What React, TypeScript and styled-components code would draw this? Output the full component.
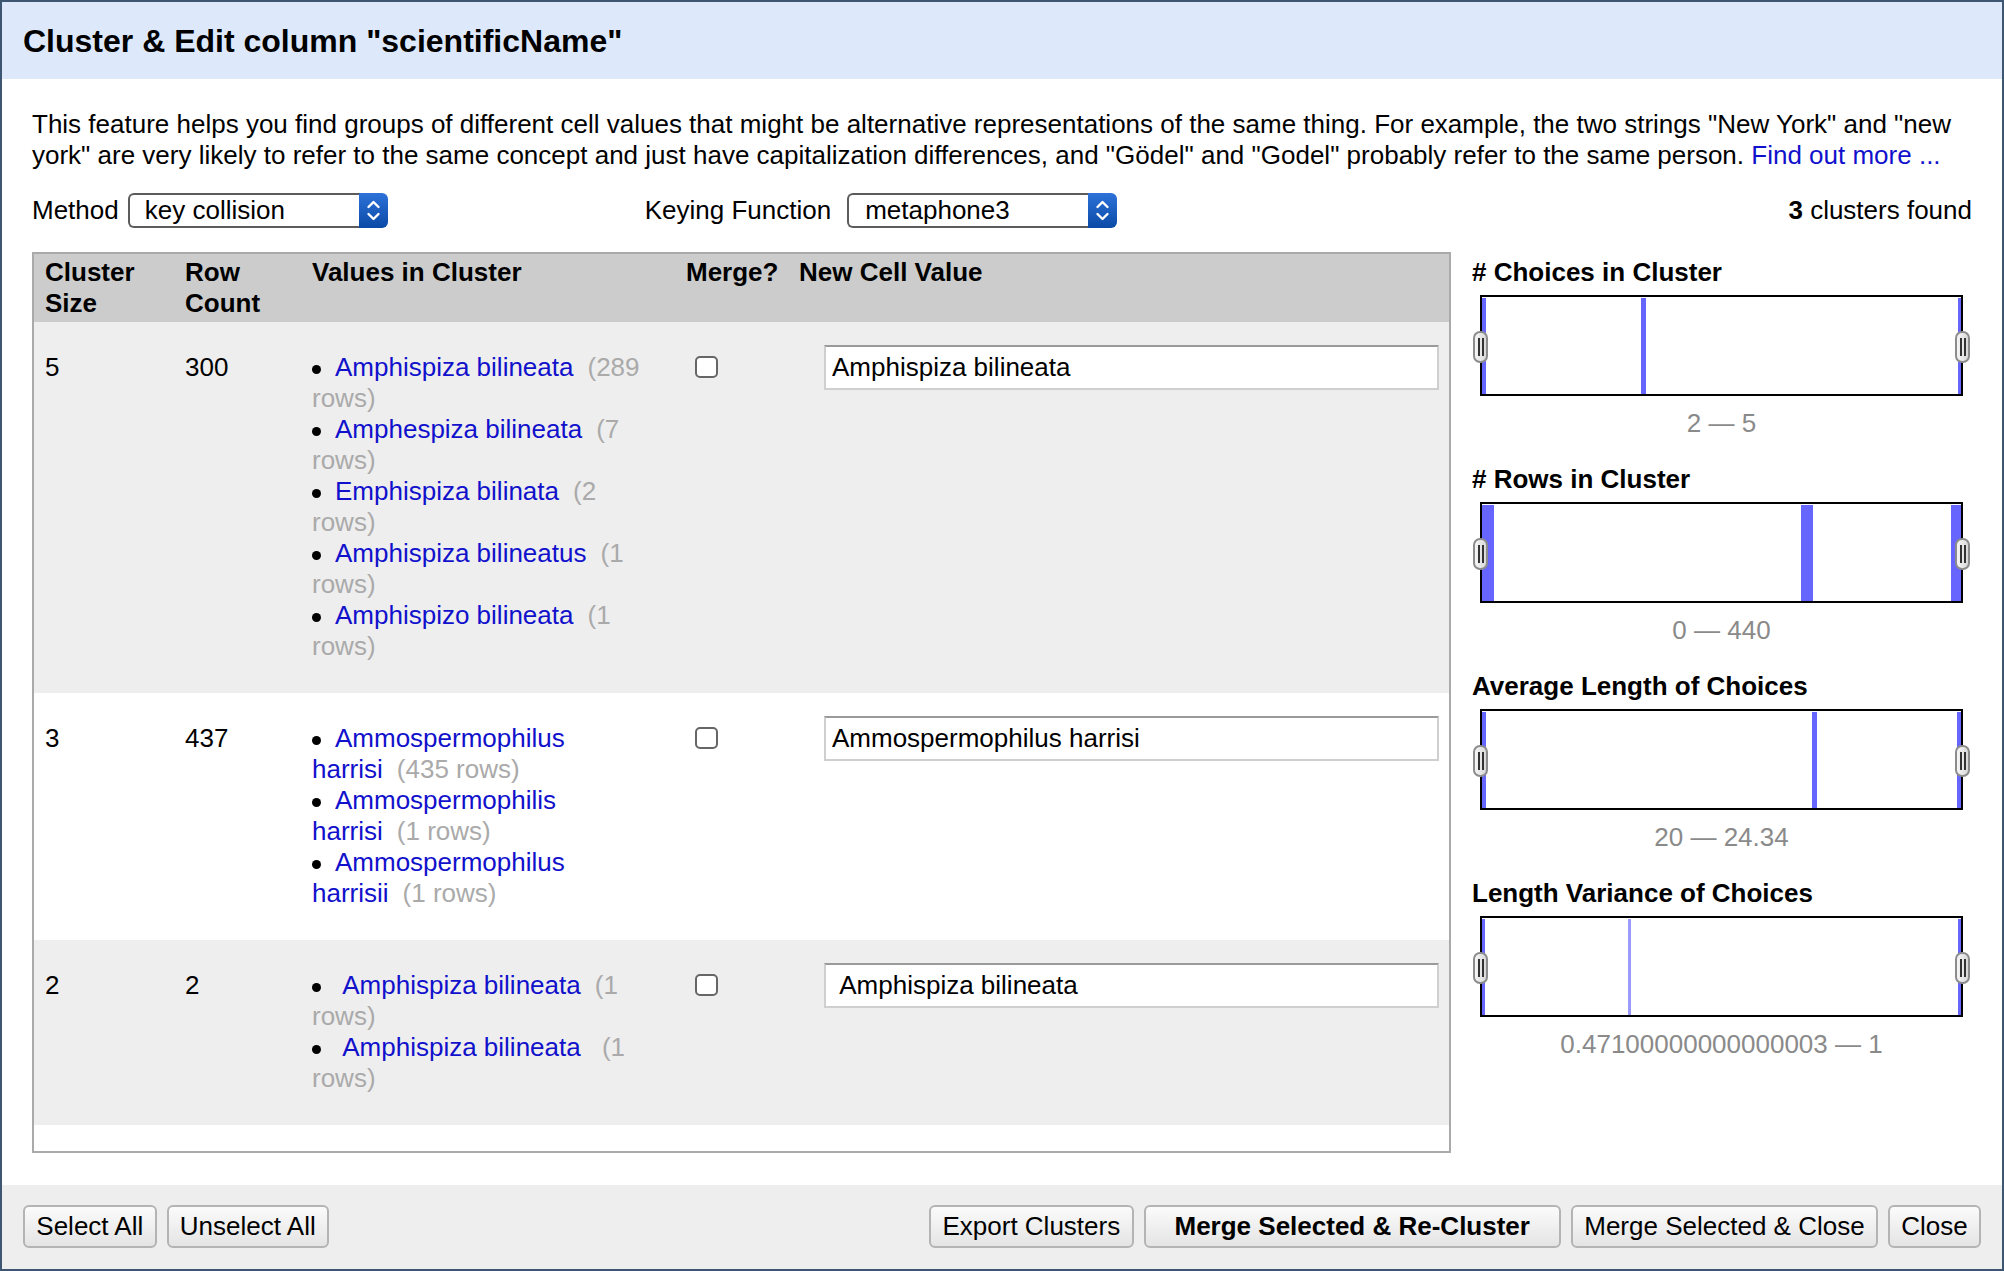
import styled, { createGlobalStyle } from 'styled-components';

const GlobalStyle = createGlobalStyle`
  html, body {
    margin: 0;
    padding: 0;
    background: #fff;
  }
  body {
    font-family: "Liberation Sans", Arial, Helvetica, sans-serif;
    font-size: 26px;
    line-height: 31px;
    color: #000;
  }
  * {
    box-sizing: border-box;
  }
`;

type Choice = { v: string; c: number };
type Cluster = { size: number; rows: number; value: string; choices: Choice[] };
type Bar = { x: number; w: number; light?: boolean };
type Facet = { title: string; range: string; bars: Bar[] };

const clusters: Cluster[] = [
    {
        size: 5,
        rows: 300,
        value: 'Amphispiza bilineata',
        choices: [
            { v: 'Amphispiza bilineata', c: 289 },
            { v: 'Amphespiza bilineata', c: 7 },
            { v: 'Emphispiza bilinata', c: 2 },
            { v: 'Amphispiza bilineatus', c: 1 },
            { v: 'Amphispizo bilineata', c: 1 },
        ],
    },
    {
        size: 3,
        rows: 437,
        value: 'Ammospermophilus harrisi',
        choices: [
            { v: 'Ammospermophilus harrisi', c: 435 },
            { v: 'Ammospermophilis harrisi', c: 1 },
            { v: 'Ammospermophilus harrisii', c: 1 },
        ],
    },
    {
        size: 2,
        rows: 2,
        value: '\u00a0Amphispiza bilineata',
        choices: [
            { v: '\u00a0Amphispiza bilineata', c: 1 },
            { v: '\u00a0Amphispiza bilineata\u00a0', c: 1 },
        ],
    },
];

const facets: Facet[] = [
    { title: '# Choices in Cluster', range: '2 — 5', bars: [{ x: 0, w: 4 }, { x: 159, w: 5 }, { x: 476, w: 3 }] },
    { title: '# Rows in Cluster', range: '0 — 440', bars: [{ x: 0, w: 12 }, { x: 319, w: 12 }, { x: 469, w: 10 }] },
    { title: 'Average Length of Choices', range: '20 — 24.34', bars: [{ x: 0, w: 4 }, { x: 330, w: 5 }, { x: 475, w: 4 }] },
    {
        title: 'Length Variance of Choices',
        range: '0.47100000000000003 — 1',
        bars: [{ x: 0, w: 3 }, { x: 146, w: 3, light: true }, { x: 476, w: 3 }],
    },
];

// dialog frame
const Dialog = styled.div`
    width: 2004px;
    height: 1271px;
    border: 2px solid #3d5773;
    display: flex;
    flex-direction: column;
    background: #fff;
`;

const Header = styled.div`
    height: 77px;
    flex: none;
    background: #dde9fb;
    display: flex;
    align-items: center;
    padding-left: 21px;
`;

const Title = styled.h1`
    margin: 0;
    font-size: 32px;
    line-height: 36px;
    font-weight: bold;
`;

const Body = styled.div`
    flex: 1;
    padding: 29.5px 30px 0 30px;
`;

const Description = styled.p`
    margin: 0;
`;

const Link = styled.a`
    color: #1111cc;
    text-decoration: none;
`;

const Controls = styled.div`
    margin-top: 22px;
    height: 35px;
    display: flex;
    align-items: center;
`;

const ControlGroup = styled.div<{ $offset?: number }>`
    display: flex;
    align-items: center;
    margin-left: ${(p) => p.$offset || 0}px;
`;

const SelectShell = styled.div<{ $width: number; $gap: number }>`
    display: flex;
    width: ${(p) => p.$width}px;
    height: 35px;
    margin-left: ${(p) => p.$gap}px;
`;

const SelectValue = styled.div<{ $pad: number }>`
    flex: 1;
    border: 2px solid #5c5c5c;
    border-right: none;
    border-radius: 6px 0 0 6px;
    background: #fff;
    padding-left: ${(p) => p.$pad}px;
    display: flex;
    align-items: center;
`;

const Stepper = styled.div`
    width: 29px;
    flex: none;
    border-radius: 0 6px 6px 0;
    background: linear-gradient(#2d72d9, #0a4aa6);
    display: flex;
    align-items: center;
    justify-content: center;
`;

const Found = styled.div`
    margin-left: auto;
`;

const Main = styled.div`
    margin-top: 24.5px;
    display: flex;
`;

const TableBox = styled.div`
    width: 1419px;
    height: 901px;
    flex: none;
    border: 2px solid #aaaaaa;
    background: #fff;
`;

const Row = styled.div<{ $bg: string }>`
    display: grid;
    grid-template-columns: 140px 127px 374px 113px 661px;
    background: ${(p) => p.$bg};
`;

const HeadCell = styled.div`
    padding: 2.5px 0 3.5px 11px;
    font-weight: bold;
`;

const Cell = styled.div<{ $right?: number }>`
    padding: 30px ${(p) => p.$right || 0}px 31px 11px;
`;

const ValueList = styled.ul`
    margin: 0;
    padding: 0;
    list-style: none;
`;

const ValueItem = styled.li``;

const Bullet = styled.span`
    display: inline-block;
    width: 9px;
    height: 9px;
    border-radius: 50%;
    background: #000;
    margin-right: 14px;
    vertical-align: middle;
`;

const Count = styled.span`
    color: #aaaaaa;
    margin-left: 14px;
`;

const Check = styled.input`
    appearance: none;
    -webkit-appearance: none;
    display: block;
    width: 23px;
    height: 22px;
    margin: 4px 0 0 9px;
    border: 2px solid #666;
    border-radius: 5px;
    background: #fff;
`;

const CellInput = styled.input`
    display: block;
    width: 615px;
    height: 45px;
    margin: -7px 0 0 25px;
    padding: 0 0 0 6px;
    font: inherit;
    color: #000;
    background: #fff;
    border: 2px solid #cfcfcf;
    border-top-color: #9a9a9a;
    outline: none;
`;

// facet panel on the right
const Panel = styled.div`
    margin-left: 21px;
    width: 500px;
    padding-top: 4.5px;
`;

const FacetBlock = styled.div`
    margin-bottom: 25px;
`;

const FacetTitle = styled.div`
    font-weight: bold;
    margin-bottom: 7.5px;
`;

const Histogram = styled.div`
    position: relative;
    margin-left: 8px;
    width: 483px;
    height: 101px;
    border: 2px solid #000;
    background: #fff;
`;

const HistBar = styled.div<{ $light?: boolean }>`
    position: absolute;
    top: 1px;
    bottom: 0;
    background: ${(p) => (p.$light ? '#9a9aff' : '#6666ff')};
`;

const Handle = styled.span<{ $side: 'left' | 'right' }>`
    position: absolute;
    top: 50%;
    ${(p) => p.$side}: -9px;
    width: 15px;
    height: 32px;
    margin-top: -15px;
    border: 2px solid #8c8c8c;
    border-radius: 7px;
    background: linear-gradient(90deg, #f6f6f6, #d8d8d8);
    &::before,
    &::after {
        content: '';
        position: absolute;
        top: 5px;
        bottom: 5px;
        width: 2px;
        background: #333;
    }
    &::before {
        left: 3px;
    }
    &::after {
        left: 7px;
    }
`;

const Range = styled.div`
    margin: 11.5px 0 0 8px;
    width: 483px;
    text-align: center;
    color: #8a8a8a;
`;

const Footer = styled.div`
    height: 84px;
    flex: none;
    background: #eeeeee;
    display: flex;
    align-items: flex-start;
    padding: 20px 21px 0 21px;
    gap: 10px;
`;

const Button = styled.button<{ $primary?: boolean; $push?: boolean }>`
    height: 43px;
    padding: 0 ${(p) => (p.$primary ? 29 : 11.3)}px;
    margin-left: ${(p) => (p.$push ? 'auto' : '0')};
    font: inherit;
    font-weight: ${(p) => (p.$primary ? 'bold' : 'normal')};
    color: #000;
    border: 2px solid #b4b4b4;
    border-radius: 6px;
    background: linear-gradient(#fbfbfb, #e4e4e4);
    white-space: nowrap;
`;

const Chevrons = () => (
    <svg width="29" height="35" viewBox="0 0 29 35">
        <path d="M9.5 14 L14.5 9 L19.5 14" fill="none" stroke="#fff" strokeWidth="2.4" strokeLinecap="round" strokeLinejoin="round" />
        <path d="M9.5 21 L14.5 26 L19.5 21" fill="none" stroke="#fff" strokeWidth="2.4" strokeLinecap="round" strokeLinejoin="round" />
    </svg>
);

const Select = ({ value, width, gap, pad }: { value: string; width: number; gap: number; pad: number }) => (
    <SelectShell $width={width} $gap={gap}>
        <SelectValue $pad={pad}>{value}</SelectValue>
        <Stepper>
            <Chevrons />
        </Stepper>
    </SelectShell>
);

export default function App() {
    return (
        <>
            <GlobalStyle />
            <Dialog>
                <Header>
                    <Title>Cluster &amp; Edit column "scientificName"</Title>
                </Header>
                <Body>
                    <Description>
                        This feature helps you find groups of different cell values that might be alternative representations of
                        the same thing. For example, the two strings "New York" and "new york" are very likely to refer to the same
                        concept and just have capitalization differences, and "Gödel" and "Godel" probably refer to the same person.{' '}
                        <Link href="#">Find out more ...</Link>
                    </Description>
                    <Controls>
                        <ControlGroup>
                            Method
                            <Select value="key collision" width={260} gap={9} pad={15} />
                        </ControlGroup>
                        <ControlGroup $offset={257}>
                            Keying Function
                            <Select value="metaphone3" width={270} gap={16} pad={16} />
                        </ControlGroup>
                        <Found>
                            <b>3</b> clusters found
                        </Found>
                    </Controls>
                    <Main>
                        <TableBox>
                            <Row $bg="#cccccc">
                                <HeadCell>Cluster Size</HeadCell>
                                <HeadCell>Row Count</HeadCell>
                                <HeadCell>Values in Cluster</HeadCell>
                                <HeadCell>Merge?</HeadCell>
                                <HeadCell>New Cell Value</HeadCell>
                            </Row>
                            {clusters.map((cluster, i) => (
                                <Row key={i} $bg={i % 2 === 0 ? '#eeeeee' : '#ffffff'}>
                                    <Cell>{cluster.size}</Cell>
                                    <Cell>{cluster.rows}</Cell>
                                    <Cell $right={23}>
                                        <ValueList>
                                            {cluster.choices.map((choice, j) => (
                                                <ValueItem key={j}>
                                                    <Bullet />
                                                    <Link href="#">{choice.v}</Link>
                                                    <Count>({choice.c} rows)</Count>
                                                </ValueItem>
                                            ))}
                                        </ValueList>
                                    </Cell>
                                    <Cell>
                                        <Check type="checkbox" />
                                    </Cell>
                                    <Cell>
                                        <CellInput defaultValue={cluster.value} />
                                    </Cell>
                                </Row>
                            ))}
                        </TableBox>
                        <Panel>
                            {facets.map((facet) => (
                                <FacetBlock key={facet.title}>
                                    <FacetTitle>{facet.title}</FacetTitle>
                                    <Histogram>
                                        {facet.bars.map((bar, k) => (
                                            <HistBar key={k} $light={bar.light} style={{ left: bar.x, width: bar.w }} />
                                        ))}
                                        <Handle $side="left" />
                                        <Handle $side="right" />
                                    </Histogram>
                                    <Range>{facet.range}</Range>
                                </FacetBlock>
                            ))}
                        </Panel>
                    </Main>
                </Body>
                <Footer>
                    <Button>Select All</Button>
                    <Button>Unselect All</Button>
                    <Button $push>Export Clusters</Button>
                    <Button $primary>Merge Selected &amp; Re-Cluster</Button>
                    <Button>Merge Selected &amp; Close</Button>
                    <Button>Close</Button>
                </Footer>
            </Dialog>
        </>
    );
}
